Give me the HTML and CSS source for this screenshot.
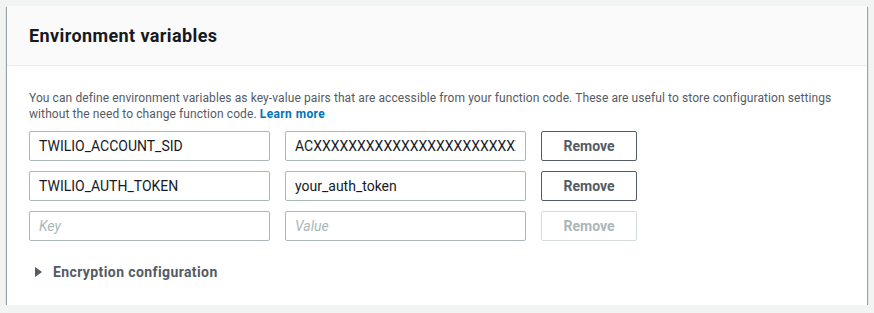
FILE: index.html
```html
<!DOCTYPE html>
<html lang="en">

<head>
    <meta charset="UTF-8">
    <meta name="viewport" content="width=device-width, initial-scale=1.0">
    <title>Environment variables</title>
    <link rel="stylesheet" href="styles.css">
</head>

<body>
    <div class="panel">
        <div class="panel-header">
            <h2 class="panel-title">Environment variables</h2>
        </div>
        <div class="panel-body">
            <p class="panel-desc">You can define environment variables as key-value pairs that are accessible from your function code. These are useful to store configuration settings without the need to change function code. <a class="panel-link" href="#">Learn more</a></p>
            <div class="env-list">
                <div class="env-row">
                    <input class="env-input" type="text" value="TWILIO_ACCOUNT_SID">
                    <input class="env-input" type="text" value="ACXXXXXXXXXXXXXXXXXXXXXXXXXXXXXXXX">
                    <button class="env-remove">Remove</button>
                </div>
                <div class="env-row">
                    <input class="env-input" type="text" value="TWILIO_AUTH_TOKEN">
                    <input class="env-input" type="text" value="your_auth_token">
                    <button class="env-remove">Remove</button>
                </div>
                <div class="env-row">
                    <input class="env-input" type="text" placeholder="Key">
                    <input class="env-input" type="text" placeholder="Value">
                    <button class="env-remove" disabled>Remove</button>
                </div>
            </div>
            <div class="expander">
                <span class="expander-arrow"></span>
                <span class="expander-label">Encryption configuration</span>
            </div>
        </div>
    </div>
</body>

</html>
```

FILE: styles.css
```css
* {
    margin: 0;
    padding: 0;
    box-sizing: border-box;
}

body {
    background: #f2f3f3;
    font-family: Roboto, sans-serif;
    color: #16191f;
    padding: 6px 7px 0 7px;
}

.panel {
    background: #fff;
    box-shadow: 0 1px 1px 0 rgba(0, 28, 36, .5), 1px 1px 1px 0 rgba(0, 28, 36, .3), -1px 1px 1px 0 rgba(0, 28, 36, .3);
    height: 299px;
}

.panel-header {
    background: #fafafa;
    border-bottom: 1px solid #eaeded;
    height: 60px;
    padding: 0 22px;
    display: flex;
    align-items: center;
}

.panel-title {
    font-size: 18px;
    font-weight: 700;
    line-height: 22px;
    letter-spacing: 0.4px;
    color: #16191f;
}

.panel-body {
    padding: 24px 22px 0 22px;
}

.panel-desc {
    font-size: 12px;
    line-height: 16px;
    letter-spacing: 0.09px;
    color: #545b64;
}

.panel-link {
    color: #0073bb;
    font-weight: 700;
    letter-spacing: 0.4px;
    text-decoration: none;
}

.env-list {
    margin-top: 9px;
    display: flex;
    flex-direction: column;
    gap: 10px;
}

.env-row {
    display: flex;
    gap: 15px;
}

.env-input {
    width: 241px;
    height: 30px;
    border: 1px solid #aab7b8;
    border-radius: 2px;
    padding: 0 9px;
    font-family: inherit;
    font-size: 14px;
    color: #16191f;
    background: #fff;
    outline: none;
}

.env-input::placeholder {
    color: #aab7b8;
    font-style: italic;
}

.env-remove {
    width: 96px;
    height: 30px;
    border: 1px solid #545b64;
    border-radius: 2px;
    background: #fff;
    font-family: inherit;
    font-size: 14px;
    font-weight: 700;
    color: #545b64;
}

.env-remove:disabled {
    border-color: #d5dbdb;
    color: #aab7b8;
}

.expander {
    margin-top: 21px;
    display: flex;
    align-items: center;
    gap: 11px;
    padding-left: 6px;
    color: #545b64;
}

.expander-arrow {
    width: 0;
    height: 0;
    border-top: 5px solid transparent;
    border-bottom: 5px solid transparent;
    border-left: 7px solid #545b64;
}

.expander-label {
    font-size: 14px;
    font-weight: 700;
    line-height: 20px;
    letter-spacing: 0.4px;
}
```
